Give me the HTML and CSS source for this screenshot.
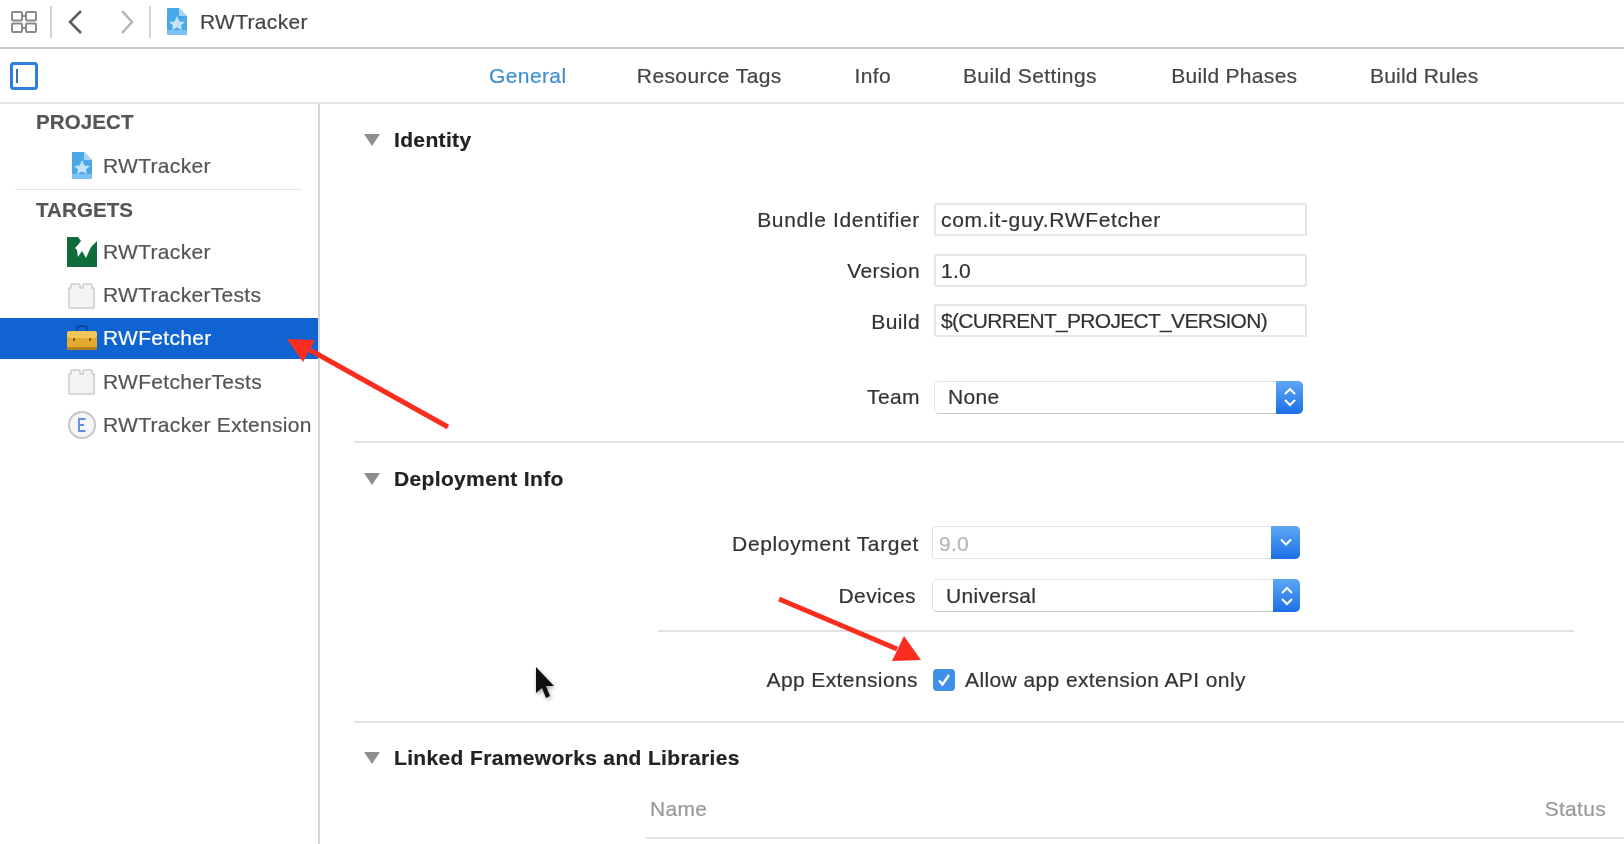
FILE: index.html
```html
<!DOCTYPE html>
<html>
<head>
    <title>RWTracker</title>
    <link rel="stylesheet" href="styles.css">
</head>
<body>
    <svg width="0" height="0" class="defs">
        <symbol id="doc" viewBox="0 0 22 29">
            <path d="M2 1h11l8 8v18a1 1 0 0 1-1 1H2a1 1 0 0 1-1-1V2a1 1 0 0 1 1-1z" fill="#4aa8e8"/>
            <path d="M13 1l8 8h-8z" fill="#a8d6f5"/>
            <path d="M11 9l2.400 5.500 5.600.5-4 3.200 1 4.800-5-2.600-5 2.600 1-4.800-4-3.200 5.600-.5z" fill="#c4e2f8"/>
            <path d="M1 23h20v4a1 1 0 0 1-1 1H2a1 1 0 0 1-1-1z" fill="#7cc2f0"/>
        </symbol>
        <symbol id="lego" viewBox="0 0 30 27">
            <path d="M2 26V6h2V3l1-1h7l1 1v3h3V3l1-1h7l1 1v3h2v20z" fill="#f4f4f4" stroke="#cbcbcb" stroke-width="1.500" stroke-linejoin="round"/>
        </symbol>
        <symbol id="stepper" viewBox="0 0 26 32">
            <path d="M8 13l5-5 5 5M8 19l5 5 5-5" fill="none" stroke="#fff" stroke-width="2"/>
        </symbol>
        <symbol id="triangle" viewBox="0 0 16 12">
            <path d="M0 0h16L8 12z" fill="#8e8e8e"/>
        </symbol>
    </svg>

    <div class="app">
        <header class="topbar">
            <svg class="grid-icon" width="26" height="22" viewBox="0 0 26 22">
                <g fill="none" stroke="#8a8a8a" stroke-width="2">
                    <rect x="1" y="1" width="10" height="8.500" rx="1"/>
                    <rect x="15" y="1" width="10" height="8.500" rx="1"/>
                    <rect x="1" y="12.500" width="10" height="8.500" rx="1"/>
                    <rect x="15" y="12.500" width="10" height="8.500" rx="1"/>
                    <path d="M11 5h4M11 17h4"/>
                </g>
            </svg>
            <span class="sep sep-first"></span>
            <svg class="nav-back" width="15" height="24" viewBox="0 0 15 24">
                <path d="M13 1L2 12l11 11" fill="none" stroke="#5c5c5c" stroke-width="2.500"/>
            </svg>
            <svg class="nav-next" width="14" height="24" viewBox="0 0 14 24">
                <path d="M2 1l10 11L2 23" fill="none" stroke="#b4b4b4" stroke-width="2.500"/>
            </svg>
            <span class="sep sep-second"></span>
            <svg class="top-doc" width="22" height="29"><use href="#doc"/></svg>
            <span class="top-title">RWTracker</span>
        </header>

        <nav class="tabbar">
            <svg class="toggle" width="28" height="28" viewBox="0 0 28 28">
                <rect x="1.500" y="1.500" width="25" height="25" rx="2" fill="#fff" stroke="#2f7de1" stroke-width="3"/>
                <path d="M7 7v14" stroke="#3a6fb5" stroke-width="2"/>
            </svg>
            <a class="tab tab-general active">General</a>
            <a class="tab tab-tags">Resource Tags</a>
            <a class="tab tab-info">Info</a>
            <a class="tab tab-settings">Build Settings</a>
            <a class="tab tab-phases">Build Phases</a>
            <a class="tab tab-rules">Build Rules</a>
        </nav>

        <div class="main">
            <aside class="sidebar">
                <div class="side-head side-head-project">PROJECT</div>
                <div class="side-row project-row">
                    <span class="side-icon"><svg width="22" height="29"><use href="#doc"/></svg></span>
                    RWTracker
                </div>
                <div class="side-line"></div>
                <div class="side-head side-head-targets">TARGETS</div>
                <div class="side-row">
                    <span class="side-icon">
                        <svg width="30" height="30" viewBox="0 0 30 30">
                            <rect width="30" height="30" fill="#0f6b3a"/>
                            <path d="M11 0l3 4-4 5-2 2 2 2 1 7 4-6 4 7 5-11 5-5 1-1V0z" fill="#fff"/>
                        </svg>
                    </span>
                    RWTracker
                </div>
                <div class="side-row">
                    <span class="side-icon"><svg width="30" height="27"><use href="#lego"/></svg></span>
                    RWTrackerTests
                </div>
                <div class="side-row selected">
                    <span class="side-icon">
                        <svg width="30" height="26" viewBox="0 0 30 26">
                            <path d="M10 6V3.500C10 2 12 1 15 1s5 1 5 2.500V6" fill="none" stroke="#0a3a8a" stroke-width="1.500"/>
                            <rect x="0" y="6" width="30" height="19" rx="3" fill="#e5a92f"/>
                            <rect x="0" y="6" width="30" height="7" rx="3" fill="#f2c65a"/>
                            <path d="M7 13v3M23 13v3" stroke="#8a5a10" stroke-width="2"/>
                            <path d="M0 22h30v1a2 2 0 0 1-2 2H2a2 2 0 0 1-2-2z" fill="#b47f1e"/>
                        </svg>
                    </span>
                    RWFetcher
                </div>
                <div class="side-row">
                    <span class="side-icon"><svg width="30" height="27"><use href="#lego"/></svg></span>
                    RWFetcherTests
                </div>
                <div class="side-row">
                    <span class="side-icon">
                        <svg width="30" height="30" viewBox="0 0 30 30">
                            <circle cx="15" cy="15" r="13" fill="#f6f6f6" stroke="#c6c6c6" stroke-width="2"/>
                            <path d="M18.500 9H12v12h6.500M12 15h5" fill="none" stroke="#5b8fd6" stroke-width="1.800"/>
                        </svg>
                    </span>
                    RWTracker Extension
                </div>
            </aside>

            <section class="content">
                <div class="section section-identity">
                    <h3 class="section-head"><svg width="16" height="12"><use href="#triangle"/></svg>Identity</h3>
                    <div class="form form-identity">
                        <label class="spaced">Bundle Identifier</label>
                        <div class="field spaced">com.it-guy.RWFetcher</div>
                        <label class="low">Version</label>
                        <div class="field">1.0</div>
                        <label class="low">Build</label>
                        <div class="field tight">$(CURRENT_PROJECT_VERSION)</div>
                        <label class="team-label">Team</label>
                        <div class="select team-select">
                            <span>None</span>
                            <span class="select-btn"><svg width="26" height="32"><use href="#stepper"/></svg></span>
                        </div>
                    </div>
                </div>

                <div class="section section-deploy">
                    <h3 class="section-head"><svg width="16" height="12"><use href="#triangle"/></svg>Deployment Info</h3>
                    <div class="form form-deploy">
                        <label class="spaced low-more">Deployment Target</label>
                        <div class="select disabled">
                            <span class="low-more">9.0</span>
                            <span class="select-btn wide">
                                <svg width="14" height="9" viewBox="0 0 14 9"><path d="M2 1.500l5 5 5-5" fill="none" stroke="#fff" stroke-width="2"/></svg>
                            </span>
                        </div>
                        <label class="devices-label">Devices</label>
                        <div class="select">
                            <span>Universal</span>
                            <span class="select-btn"><svg width="26" height="32"><use href="#stepper"/></svg></span>
                        </div>
                    </div>
                    <div class="sub-line"></div>
                    <div class="form form-ext">
                        <label>App Extensions</label>
                        <div class="check-row">
                            <span class="checkbox">
                                <svg width="22" height="22" viewBox="0 0 22 22"><path d="M6 11.500l3.500 4L16 6" fill="none" stroke="#fff" stroke-width="2.400"/></svg>
                            </span>
                            Allow app extension API only
                        </div>
                    </div>
                </div>

                <div class="section section-linked">
                    <h3 class="section-head"><svg width="16" height="12"><use href="#triangle"/></svg>Linked Frameworks and Libraries</h3>
                    <div class="table-head">
                        <span>Name</span>
                        <span>Status</span>
                    </div>
                </div>
            </section>
        </div>

        <!-- annotations drawn on top of the recording -->
        <svg class="overlay" width="1624" height="844" viewBox="0 0 1624 844">
            <g fill="#fb2d1f">
                <path d="M449.200 424.800L311.200 347.800l-2.400 4.400 138 77z"/>
                <path d="M287 339l28 1-12 22z"/>
                <path d="M780 596.700l118 50-2 4.600-118-50z"/>
                <path d="M921 660l-17-24-12 25z"/>
            </g>
            <path class="cursor" d="M536 667v26l6-5 4 10 4-2-4-10h8z" fill="#111"/>
        </svg>
    </div>
</body>
</html>
```

FILE: styles.css
```css
body {
    margin: 0;
    background-color: #fff;
    font-family: "Liberation Sans", Arial, sans-serif;
    font-size: 21px;
    letter-spacing: 0.3px;
    -webkit-text-stroke: 0.2px;
    color: #333;
}

.defs {
    display: block;
    height: 0;
}

.app {
    position: relative;
    width: 1624px;
    height: 844px;
    overflow: hidden;
    filter: blur(0.5px);
}

/* top bar */
.topbar {
    display: flex;
    align-items: center;
    height: 43px;
    padding-left: 11px;
    padding-bottom: 4px;
    border-bottom: 2px solid #c9c9c9;
}

.sep {
    width: 2px;
    height: 32px;
    background-color: #d4d4d4;
}

.sep-first {
    margin-left: 13px;
    margin-right: 16px;
}

.nav-next {
    margin-left: 37px;
}

.sep-second {
    margin-left: 15px;
    margin-right: 15px;
}

.top-title {
    margin-left: 12px;
    color: #444;
}

/* tabs */
.tabbar {
    display: flex;
    align-items: center;
    height: 53px;
    padding-left: 10px;
    border-bottom: 2px solid #e2e2e2;
}

.tab {
    letter-spacing: 0.4px;
    color: #444;
}

.tab-general { margin-left: 451px; }
.tab-tags { margin-left: 70.3px; }
.tab-info { margin-left: 72.7px; }
.tab-settings { margin-left: 71.9px; }
.tab-phases { margin-left: 74.3px; letter-spacing: 0.3px; }
.tab-rules { margin-left: 72.6px; letter-spacing: 0.2px; }

.tab.active {
    color: #3d8fd1;
}

/* sidebar */
.main {
    display: flex;
    height: 741px;
}

.sidebar {
    width: 318px;
    flex-shrink: 0;
    border-right: 2px solid #d6d6d6;
    color: #555;
}

.side-head {
    display: flex;
    align-items: center;
    padding-left: 36px;
    font-weight: bold;
    font-size: 20.5px;
    letter-spacing: 0.1px;
    color: #555;
}

.side-head-project {
    height: 36px;
}

.side-head-targets {
    height: 40px;
}

.side-line {
    height: 1px;
    margin: 0 16px 0 15px;
    background-color: #e4e4e4;
}

.side-row {
    display: flex;
    align-items: center;
    height: 43.25px;
    box-sizing: border-box;
    white-space: nowrap;
}

.project-row {
    margin-top: 4px;
    margin-bottom: 2px;
}

.side-icon {
    display: flex;
    justify-content: center;
    width: 30px;
    margin-left: 67px;
    margin-right: 6px;
}

.selected {
    background-color: #0f64d2;
    background-clip: padding-box;
    border-top: 1px solid transparent;
    border-bottom: 1px solid transparent;
    color: #fff;
}

/* content */
.content {
    flex: 1;
    min-width: 0;
    padding-left: 34px;
}

.section {
    border-bottom: 2px solid #e2e2e2;
}

.section-head {
    display: flex;
    align-items: center;
    gap: 14px;
    height: 36px;
    margin: 0;
    padding-left: 10px;
    font-size: 21px;
    font-weight: bold;
    letter-spacing: 0.35px;
    color: #222;
}

.section-identity {
    height: 339px;
    padding-top: 18px;
    box-sizing: border-box;
}

.form {
    display: grid;
    grid-template-columns: 566px 373px;
    column-gap: 14px;
    align-items: center;
}

label {
    text-align: right;
    letter-spacing: 0.4px;
    color: #333;
}

label.spaced,
.spaced {
    letter-spacing: 0.65px;
}

.tight {
    letter-spacing: -0.7px;
}

.low {
    padding-top: 2px;
}

.low-more {
    padding-top: 3px;
}

.devices-label {
    padding-right: 3px;
}

.form-identity {
    margin-top: 45px;
    row-gap: 17.5px;
}

.field {
    height: 33px;
    line-height: 30px;
    padding-left: 5px;
    box-sizing: border-box;
    border: 2px solid #e6e6e6;
    border-radius: 2px;
    color: #333;
}

.team-label {
    margin-top: 26px;
}

.team-select {
    margin-top: 26px;
}

.select {
    display: flex;
    justify-content: space-between;
    align-items: center;
    height: 33px;
    padding-left: 13px;
    box-sizing: border-box;
    border: 1px solid #e4e4e4;
    border-bottom-color: #c8c8c8;
    border-radius: 5px;
    color: #333;
}

.team-select {
    width: 369px;
}

.select-btn {
    display: flex;
    align-items: center;
    justify-content: center;
    width: 27px;
    height: 33px;
    margin: -1px -1px -1px 0;
    border-radius: 0 5px 5px 0;
    background: linear-gradient(#5fa8f5, #1a6fe6);
}

.select-btn.wide {
    width: 29px;
}

.select.disabled {
    padding-left: 6px;
    border-radius: 2px;
    border-color: #e4e4e4;
    color: #b5b5b5;
}

.section-deploy {
    height: 280px;
    padding-top: 18px;
    box-sizing: border-box;
}

.form-deploy {
    grid-template-columns: 565px 368px;
    column-gap: 13px;
    row-gap: 20px;
    margin-top: 29px;
}

.sub-line {
    height: 2px;
    margin: 18px 50px 0 304px;
    background-color: #e2e2e2;
}

.form-ext {
    grid-template-columns: 564px 500px;
    column-gap: 15px;
    margin-top: 36px;
}

.check-row {
    display: flex;
    align-items: center;
    gap: 10px;
    letter-spacing: 0.4px;
}

.checkbox {
    display: flex;
    width: 22px;
    height: 22px;
    border-radius: 4px;
    background-color: #3f8ee8;
}

.section-linked {
    border-bottom: 0;
    padding-top: 17px;
}

.table-head {
    display: flex;
    justify-content: space-between;
    height: 49px;
    margin-top: 14px;
    margin-left: 292px;
    padding: 0 18px 0 4px;
    line-height: 38px;
    box-sizing: border-box;
    border-bottom: 2px solid #e2e2e2;
    color: #999;
}

.overlay {
    position: absolute;
    top: 0;
    left: 0;
}

.cursor {
    filter: drop-shadow(1px 2px 2px rgba(0, 0, 0, 0.35));
}
```
